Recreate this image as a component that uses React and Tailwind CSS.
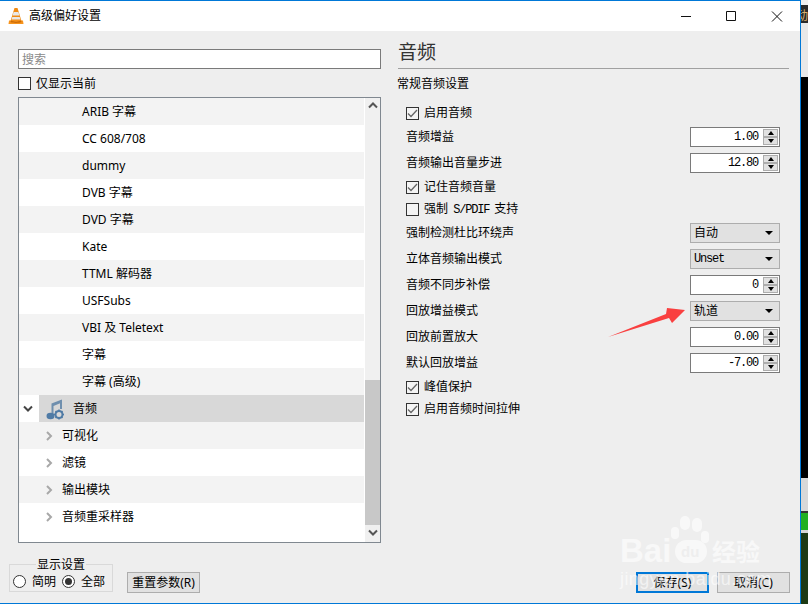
const font = "font-['Noto_Sans','Noto_Sans_CJK_SC',sans-serif]";
const mono = "font-['Liberation_Mono','Noto_Sans_CJK_SC',monospace]";

const treeTop = ['ARIB 字幕', 'CC 608/708', 'dummy', 'DVB 字幕', 'DVD 字幕', 'Kate', 'TTML 解码器', 'USFSubs', 'VBI 及 Teletext', '字幕', '字幕 (高级)'];
const treeBottom = ['可视化', '滤镜', '输出模块', '音频重采样器'];

function VlcIcon() {
  return (
    <svg width="16" height="18" viewBox="0 0 16 18">
      <path d="M6.5 1h3l4 13H2.500z" fill="#f08a12" />
      <path d="M5.600 5h4.800l1 3.500H4.600z" fill="#e8e8e8" />
      <path d="M4.300 10h7.400l.8 2.500H3.500z" fill="#e8e8e8" />
      <path d="M1 13.500h14l.5 3.500H.5z" fill="#f7941d" />
      <path d="M3 13.500c2 1.500 8 1.500 10 0l.5 1.500c-3 1.200-8 1.200-11 0z" fill="#c96a08" />
    </svg>
  );
}

function MusicIcon() {
  return (
    <svg width="18" height="22" viewBox="0 0 18 22">
      <path d="M5.500 5.500 16 1.500v3L7.500 8v9.500h-2z" fill="#6f8fae" />
      <path d="M14 2h2v9h-2z" fill="#6f8fae" />
      <ellipse cx="4.500" cy="18" rx="4" ry="3.300" fill="#4f7ba6" />
      <circle cx="13" cy="16.500" r="3.500" fill="none" stroke="#4f7ba6" strokeWidth="2" />
      <path d="M13 11.500v2M13 19.500v2M8 16.500h2M16 16.500h2M9.500 13l1.400 1.400M15.100 18.600l1.400 1.400M16.500 13l-1.400 1.400M10.900 18.600 9.500 20" stroke="#4f7ba6" strokeWidth="1.500" />
    </svg>
  );
}

function Chevron({ dir = 'right', color = '#a8a8a8' }) {
  const d = { right: 'M2 1l4 4-4 4', down: 'M1 2.500l4 4 4-4', up: 'M1 6.500l4-4 4 4' }[dir];
  return (
    <svg width="10" height="10" viewBox="0 0 10 10" className="shrink-0">
      <path d={d} fill="none" stroke={color} strokeWidth="2" />
    </svg>
  );
}

function Check({ checked, label, labelClass = '' }) {
  return (
    <div className="flex items-center h-5">
      <span className="w-[13px] h-[13px] border border-[#333] bg-[#f4f4f4] shrink-0 flex items-center justify-center">
        {checked && (
          <svg width="11" height="11" viewBox="0 0 11 11">
            <path d="M1 5.500l3 3L10 2" fill="none" stroke="#666" strokeWidth="1.300" />
          </svg>
        )}
      </span>
      <span className={`ml-[5px] ${labelClass}`}>{label}</span>
    </div>
  );
}

function Spin({ label, value, className = 'mt-1.5' }) {
  return (
    <div className={`flex items-center justify-between h-5 ${className}`}>
      <span>{label}</span>
      <div className="w-[90px] h-5 border border-[#7a7a7a] bg-white flex items-center justify-end">
        <span className={`${mono} text-xs tracking-[-1.2px] mr-[5px]`}>{value}</span>
        <div className="w-[15px] h-4 flex flex-col mr-px">
          <span className="h-2 bg-[#e1e1e1] border border-[#adadad] flex items-center justify-center">
            <span className="border-x-[3.5px] border-x-transparent border-b-[4px] border-b-black" />
          </span>
          <span className="h-2 bg-[#e1e1e1] border border-[#adadad] flex items-center justify-center">
            <span className="border-x-[3.5px] border-x-transparent border-t-[4px] border-t-black" />
          </span>
        </div>
      </div>
    </div>
  );
}

function Select({ label, value, className = 'mt-1.5', valueClass = '' }) {
  return (
    <div className={`flex items-center justify-between h-5 ${className}`}>
      <span>{label}</span>
      <div className="w-[90px] h-5 border border-[#adadad] bg-[#e1e1e1] flex items-center justify-between pl-[3px] pr-[6px]">
        <span className={valueClass}>{value}</span>
        <span className="border-x-[4px] border-x-transparent border-t-[4px] border-t-black" />
      </div>
    </div>
  );
}

function Radio({ checked, label }) {
  return (
    <div className="flex items-center">
      <span className="w-[13px] h-[13px] rounded-full border border-[#333] bg-white flex items-center justify-center">
        {checked && <span className="w-[7px] h-[7px] rounded-full bg-[#333]" />}
      </span>
      <span className="ml-[6px]">{label}</span>
    </div>
  );
}

function Watermark() {
  return (
    <div className="absolute left-[618px] top-[516px] w-[160px] h-[72px] text-white/60 pointer-events-none">
      <div className="absolute left-[53px] top-[11px] w-2 h-3 rounded-full bg-white/60" />
      <div className="absolute left-[62px] top-0 w-2.5 h-3.5 rounded-full bg-white/60" />
      <div className="absolute left-[74px] top-[2px] w-2.5 h-3.5 rounded-full bg-white/60" />
      <div className="absolute left-[83px] top-[15px] w-2 h-3 rounded-full bg-white/60" />
      <div className="absolute left-[57px] top-[24px] w-8 h-[23px] rounded-xl bg-white/60" />
      <span className="absolute left-[2px] top-[17px] text-[33px] leading-[36px] font-bold font-['Liberation_Sans',sans-serif]">Bai</span>
      <span className="absolute left-[63px] top-[28px] text-[15px] leading-[16px] font-bold text-[#eeeeee] font-['Liberation_Sans',sans-serif]">du</span>
      <span className="absolute left-[94px] top-[22px] text-2xl leading-[28px] font-bold">经验</span>
      <span className="absolute left-[2px] top-[53px] text-lg leading-[20px] tracking-[0.4px] font-['Liberation_Sans',sans-serif]">jingyan.baidu.com</span>
    </div>
  );
}

export default function App() {
  return (
    <div className={`relative w-[808px] h-[604px] flex overflow-hidden text-xs text-black ${font}`}>
      <div className="w-[801px] h-[604px] flex flex-col border-y border-r border-[#0078d7] bg-[#eeeeee]">
        <div className="h-[30px] bg-white flex items-center shrink-0">
          <span className="ml-2 mr-[5px] flex"><VlcIcon /></span>
          <span>高级偏好设置</span>
          <div className="ml-auto flex items-center">
            <svg width="103" height="12" viewBox="0 0 103 12" className="mr-[17px]">
              <path d="M1 6.500h10" stroke="#111" />
              <path d="M46.500 1.500h9v9h-9z" fill="none" stroke="#111" />
              <path d="M92 1.500l10 10M102 1.500l-10 10" stroke="#111" />
            </svg>
          </div>
        </div>

        <div className="flex flex-1">
          <div className="ml-[18px] w-[363px] pt-[18px]">
            <div className="h-5 border border-[#7a7a7a] bg-white pl-[3px] pt-px flex items-center text-[#8a8a8a]">搜索</div>
            <div className="h-[14px] mt-[7px] flex items-center">
              <span className="w-[13px] h-[13px] border border-[#333] bg-white" />
              <span className="ml-[5px] pt-px">仅显示当前</span>
            </div>
            <div className="h-[446px] mt-[7px] border border-[#808890] bg-white flex">
              <div className="w-[345px] shrink-0">
                {treeTop.map((t, i) => (
                  <div key={t} className={`h-[27px] pl-[63px] flex items-center ${i % 2 === 0 ? 'bg-[#f3f3f3]' : 'bg-white'}`}>{t}</div>
                ))}
                <div className="h-[27px] flex items-center">
                  <span className="w-5 flex justify-center pr-0.5"><Chevron dir="down" color="#444" /></span>
                  <div className="flex-1 h-full bg-[#d8d8d8] flex items-center pl-[7px]">
                    <MusicIcon />
                    <span className="ml-[9px]">音频</span>
                  </div>
                </div>
                {treeBottom.map((t, i) => (
                  <div key={t} className={`h-[27px] pl-[26px] flex items-center ${i % 2 === 0 ? 'bg-[#f3f3f3]' : 'bg-white'}`}>
                    <Chevron />
                    <span className="ml-[7px]">{t}</span>
                  </div>
                ))}
              </div>
              <div className="flex-1 ml-px bg-[#f0f0f0] flex flex-col items-center">
                <div className="h-[17px] flex items-center"><Chevron dir="up" color="#555" /></div>
                <div className="flex-1 w-full pt-[265px]">
                  <div className="h-[145px] w-[15px] bg-[#c8c8c8]" />
                </div>
                <div className="h-[18px] flex items-center"><Chevron dir="down" color="#555" /></div>
              </div>
            </div>
          </div>

          <div className="ml-[17px] w-[391px]">
            <div className="h-[37px] pt-[8px] text-[19px] leading-[26px] text-[#333]">音频</div>
            <div className="h-px bg-[#a0a0a0]" />
            <div className="h-[29px] -ml-px flex items-center">常规音频设置</div>
            <div className="pl-2 pr-[9px] pt-[5px]">
              <Check checked label="启用音频" />
              <Spin label="音频增益" value="1.00" className="mt-1" />
              <Spin label="音频输出音量步进" value="12.80" />
              <div className="mt-1"><Check checked label="记住音频音量" /></div>
              <div className="mt-0.5">
                <Check label={<>强制 <span className={`${mono} tracking-[-1.2px] mx-[2px]`}>S/PDIF</span> 支持</>} />
              </div>
              <Select label="强制检测杜比环绕声" value="自动" className="mt-1" />
              <Select label="立体音频输出模式" value="Unset" valueClass={`${mono} tracking-[-1.2px]`} />
              <Spin label="音频不同步补偿" value="0" />
              <Select label="回放增益模式" value="轨道" />
              <Spin label="回放前置放大" value="0.00" />
              <Spin label="默认回放增益" value="-7.00" />
              <div className="mt-1"><Check checked label="峰值保护" /></div>
              <div className="mt-0.5"><Check checked label="启用音频时间拉伸" /></div>
            </div>
          </div>
        </div>

        <div className="h-[49px] shrink-0 flex items-start pl-[9px] pt-[10px]">
          <div className="relative w-[104px] h-[28px] border border-[#d9d9d9] flex items-center gap-[6px] pl-[3px] pt-[7px]">
            <span className="absolute left-[26px] -top-[8px] bg-[#eeeeee] px-px leading-[16px]">显示设置</span>
            <Radio label="简明" />
            <Radio checked label="全部" />
          </div>
          <button className="ml-[14px] mt-[8px] w-[73px] h-[21px] bg-[#e1e1e1] border border-[#adadad]">重置参数(R)</button>
          <button className="ml-[436px] mt-[8px] w-[73px] h-[21px] bg-[#e1e1e1] border-2 border-[#0078d7]">保存(S)</button>
          <button className="ml-2 mt-[8px] w-[73px] h-[21px] bg-[#e1e1e1] border border-[#adadad]">取消(C)</button>
        </div>
      </div>

      <div className="w-[7px] h-[604px] flex flex-col shrink-0">
        <div className="h-[5px] bg-[#f0f0f0]" />
        <div className="h-[18px] bg-[#2a2a2a] overflow-hidden flex items-end">
          <span className="-ml-[5px] text-xs leading-[14px] text-[#d8b070]">动</span>
        </div>
        <div className="h-[54px] bg-[#e8e8e8]" />
        <div className="h-[401px] bg-black" />
        <div className="h-[33px] bg-[#d8d8d8]" />
        <div className="h-[2px] bg-[#333]" />
        <div className="h-[17px] bg-[#22b022]" />
        <div className="h-[3px] bg-[#d8d8d8]" />
        <div className="flex-1 bg-[#1e3a14]" />
      </div>

      <Watermark />
      {/* 红色箭头标注 */}
      <svg width="808" height="604" viewBox="0 0 808 604" className="absolute left-0 top-0 pointer-events-none">
        <polygon points="608,337 666,314 667,308 685,310 672,323 669,318" fill="#f94040" />
      </svg>
    </div>
  );
}
